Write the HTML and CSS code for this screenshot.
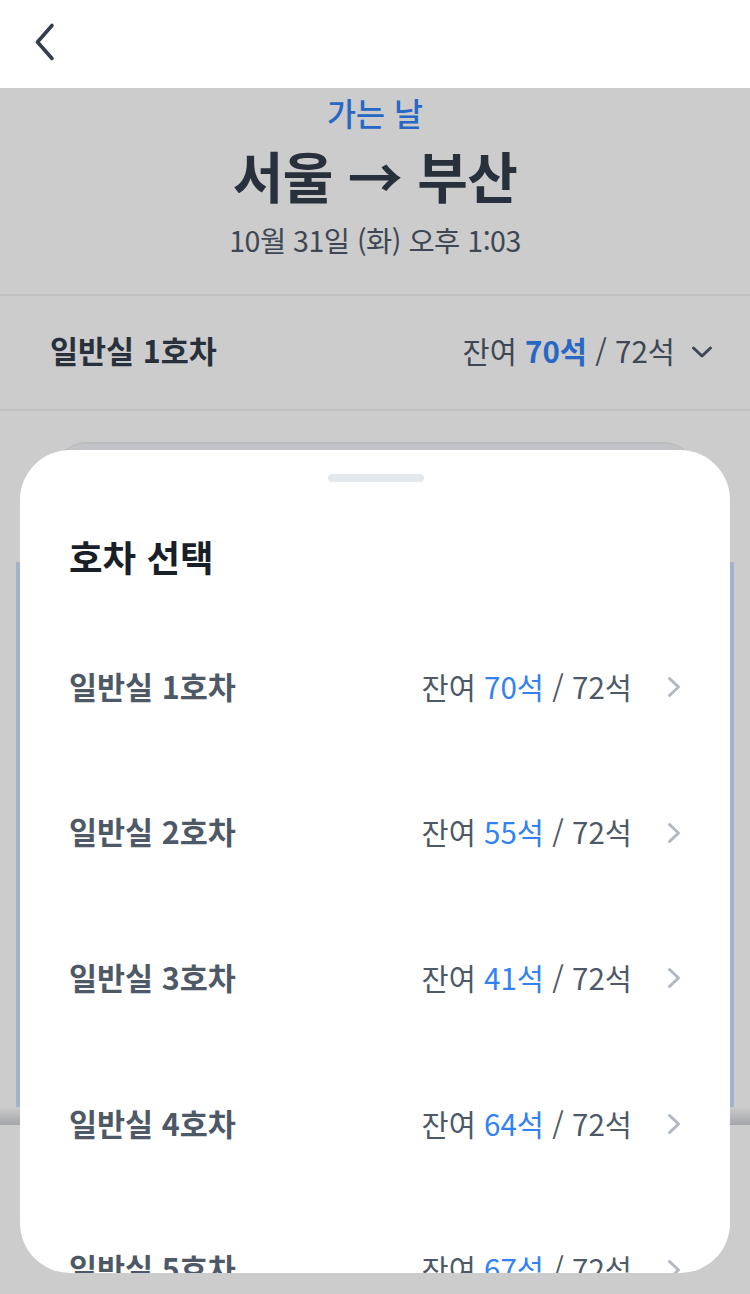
FILE: index.html
```html
<!DOCTYPE html>
<html lang="ko">
<head>
<meta charset="utf-8">
<title>호차 선택</title>
<link rel="stylesheet" href="styles.css">
</head>
<body>
<div class="screen">
  <header class="topbar">
    <button class="back" aria-label="뒤로">
      <svg width="24" height="40" viewBox="0 0 24 40"><path d="M19 3.5 L4.5 20 L19 36.5" fill="none" stroke="#333d4b" stroke-width="3.6" stroke-linecap="round" stroke-linejoin="round"/></svg>
    </button>
  </header>

  <main class="page">
    <section class="route">
      <div class="route-label">가는 날</div>
      <h1 class="route-title">서울 → 부산</h1>
      <div class="route-date">10월 31일 (화) 오후 1:03</div>
    </section>
    <div class="car-row">
      <span class="car-name">일반실 1호차</span>
      <span class="car-seats">
        <span>잔여 <b class="num-strong">70석</b> / 72석</span>
        <svg width="24" height="24" viewBox="0 0 24 24"><path d="M3.5 8 L12 16 L20.5 8" fill="none" stroke="#4e5968" stroke-width="3" stroke-linecap="round" stroke-linejoin="round"/></svg>
      </span>
    </div>
    <div class="legend-card"></div>
    <div class="seat-panel"></div>
    <div class="bottom-bar"></div>
  </main>

  <div class="dim"></div>

  <div class="sheet">
    <div class="handle"></div>
    <h2 class="sheet-title">호차 선택</h2>
    <ul class="car-list">
      <li class="car-item"><span class="item-name">일반실 1호차</span><span class="item-right"><span class="item-seats">잔여 <span class="num">70석</span> / 72석</span><svg class="chev" width="16" height="24" viewBox="0 0 16 24"><path d="M3.5 3.5 L12.5 12 L3.5 20.5" fill="none" stroke="#b0b8c1" stroke-width="3" stroke-linecap="round" stroke-linejoin="round"/></svg></span></li>
      <li class="car-item"><span class="item-name">일반실 2호차</span><span class="item-right"><span class="item-seats">잔여 <span class="num">55석</span> / 72석</span><svg class="chev" width="16" height="24" viewBox="0 0 16 24"><path d="M3.5 3.5 L12.5 12 L3.5 20.5" fill="none" stroke="#b0b8c1" stroke-width="3" stroke-linecap="round" stroke-linejoin="round"/></svg></span></li>
      <li class="car-item"><span class="item-name">일반실 3호차</span><span class="item-right"><span class="item-seats">잔여 <span class="num">41석</span> / 72석</span><svg class="chev" width="16" height="24" viewBox="0 0 16 24"><path d="M3.5 3.5 L12.5 12 L3.5 20.5" fill="none" stroke="#b0b8c1" stroke-width="3" stroke-linecap="round" stroke-linejoin="round"/></svg></span></li>
      <li class="car-item"><span class="item-name">일반실 4호차</span><span class="item-right"><span class="item-seats">잔여 <span class="num">64석</span> / 72석</span><svg class="chev" width="16" height="24" viewBox="0 0 16 24"><path d="M3.5 3.5 L12.5 12 L3.5 20.5" fill="none" stroke="#b0b8c1" stroke-width="3" stroke-linecap="round" stroke-linejoin="round"/></svg></span></li>
      <li class="car-item"><span class="item-name">일반실 5호차</span><span class="item-right"><span class="item-seats">잔여 <span class="num">67석</span> / 72석</span><svg class="chev" width="16" height="24" viewBox="0 0 16 24"><path d="M3.5 3.5 L12.5 12 L3.5 20.5" fill="none" stroke="#b0b8c1" stroke-width="3" stroke-linecap="round" stroke-linejoin="round"/></svg></span></li>
    </ul>
  </div>
</div>
</body>
</html>
```

FILE: styles.css
```css
* { box-sizing: border-box; }
html, body { margin: 0; padding: 0; }
body {
  width: 750px;
  height: 1294px;
  overflow: hidden;
  background: #ffffff;
  font-family: "Noto Sans CJK KR", "Noto Sans", sans-serif;
  color: #333d4b;
}
.screen {
  position: relative;
  width: 750px;
  height: 1294px;
  overflow: hidden;
}
.topbar {
  height: 88px;
  background: #ffffff;
  display: flex;
  align-items: center;
  padding-left: 33px;
}
.back {
  border: 0;
  background: none;
  padding: 0;
  width: 24px;
  height: 40px;
  display: flex;
  margin-top: -4px;
}
.page {
  position: relative;
  height: 1206px;
  background: #ffffff;
}
.route {
  display: flex;
  flex-direction: column;
  align-items: center;
  border-bottom: 2px solid #eef0f3;
  padding-bottom: 36px;
}
.route-label {
  height: 48px;
  line-height: 48px;
  font-size: 31.5px;
  font-weight: 500;
  color: #3182f6;
}
.route-title {
  margin: 8px 0 0;
  height: 60px;
  line-height: 60px;
  font-size: 55px;
  font-weight: 700;
  color: #333d4b;
  letter-spacing: -0.5px;
}
.route-date {
  margin-top: 18px;
  height: 36px;
  line-height: 36px;
  font-size: 28.5px;
  font-weight: 400;
  color: #4e5968;
  letter-spacing: -0.5px;
}
.car-row {
  height: 115px;
  display: flex;
  align-items: center;
  justify-content: space-between;
  padding: 0 36px 5px 50px;
  border-bottom: 2px solid #eef0f3;
}
.car-name {
  font-size: 30.5px;
  font-weight: 700;
  color: #333d4b;
}
.car-seats {
  display: flex;
  align-items: center;
  gap: 15px;
  font-size: 29.5px;
  color: #4e5968;
}
.car-seats svg {
  margin-top: 3px;
}
.num-strong {
  color: #3182f6;
  font-weight: 700;
}
.legend-card {
  margin: 31px 54px 0;
  height: 100px;
  border-radius: 32px;
  background: #f4f6f9;
  border-top: 2px solid #eaecef;
}
.seat-panel {
  margin: 20px 16px 0;
  height: 545px;
  background: #cae0ff;
}
.bottom-bar {
  position: absolute;
  left: 0;
  right: 0;
  bottom: 0;
  height: 169px;
  background: #ffffff;
}
.bottom-bar::before {
  content: "";
  position: absolute;
  left: 0;
  right: 0;
  top: -18px;
  height: 18px;
  background: linear-gradient(to bottom, rgba(20, 35, 60, 0), rgba(20, 35, 60, 0.22));
}
.dim {
  position: absolute;
  left: 0;
  right: 0;
  top: 88px;
  bottom: 0;
  background: rgba(0, 0, 0, 0.2);
}
.sheet {
  position: absolute;
  left: 20px;
  right: 20px;
  top: 450px;
  height: 823px;
  background: #ffffff;
  border-radius: 50px;
  overflow: hidden;
  padding: 24px 48px 0 49px;
}
.handle {
  width: 96px;
  height: 8px;
  border-radius: 4px;
  background: #e5e8eb;
  margin: 0 auto;
}
.sheet-title {
  margin: 51px 0 0;
  height: 48px;
  line-height: 48px;
  font-size: 36.5px;
  font-weight: 700;
  color: #191f28;
}
.car-list {
  list-style: none;
  margin: 33.5px 0 0;
  padding: 0;
}
.car-item {
  height: 145.6px;
  display: flex;
  align-items: center;
  justify-content: space-between;
  padding-bottom: 3px;
}
.item-name {
  font-size: 30.5px;
  font-weight: 700;
  color: #4e5968;
}
.item-right {
  display: flex;
  align-items: center;
  gap: 34px;
}
.item-seats {
  font-size: 29.5px;
  font-weight: 400;
  color: #4e5968;
}
.item-right .chev {
  margin-top: 3px;
}
.num {
  color: #3182f6;
}
.chev {
  display: block;
}
```
